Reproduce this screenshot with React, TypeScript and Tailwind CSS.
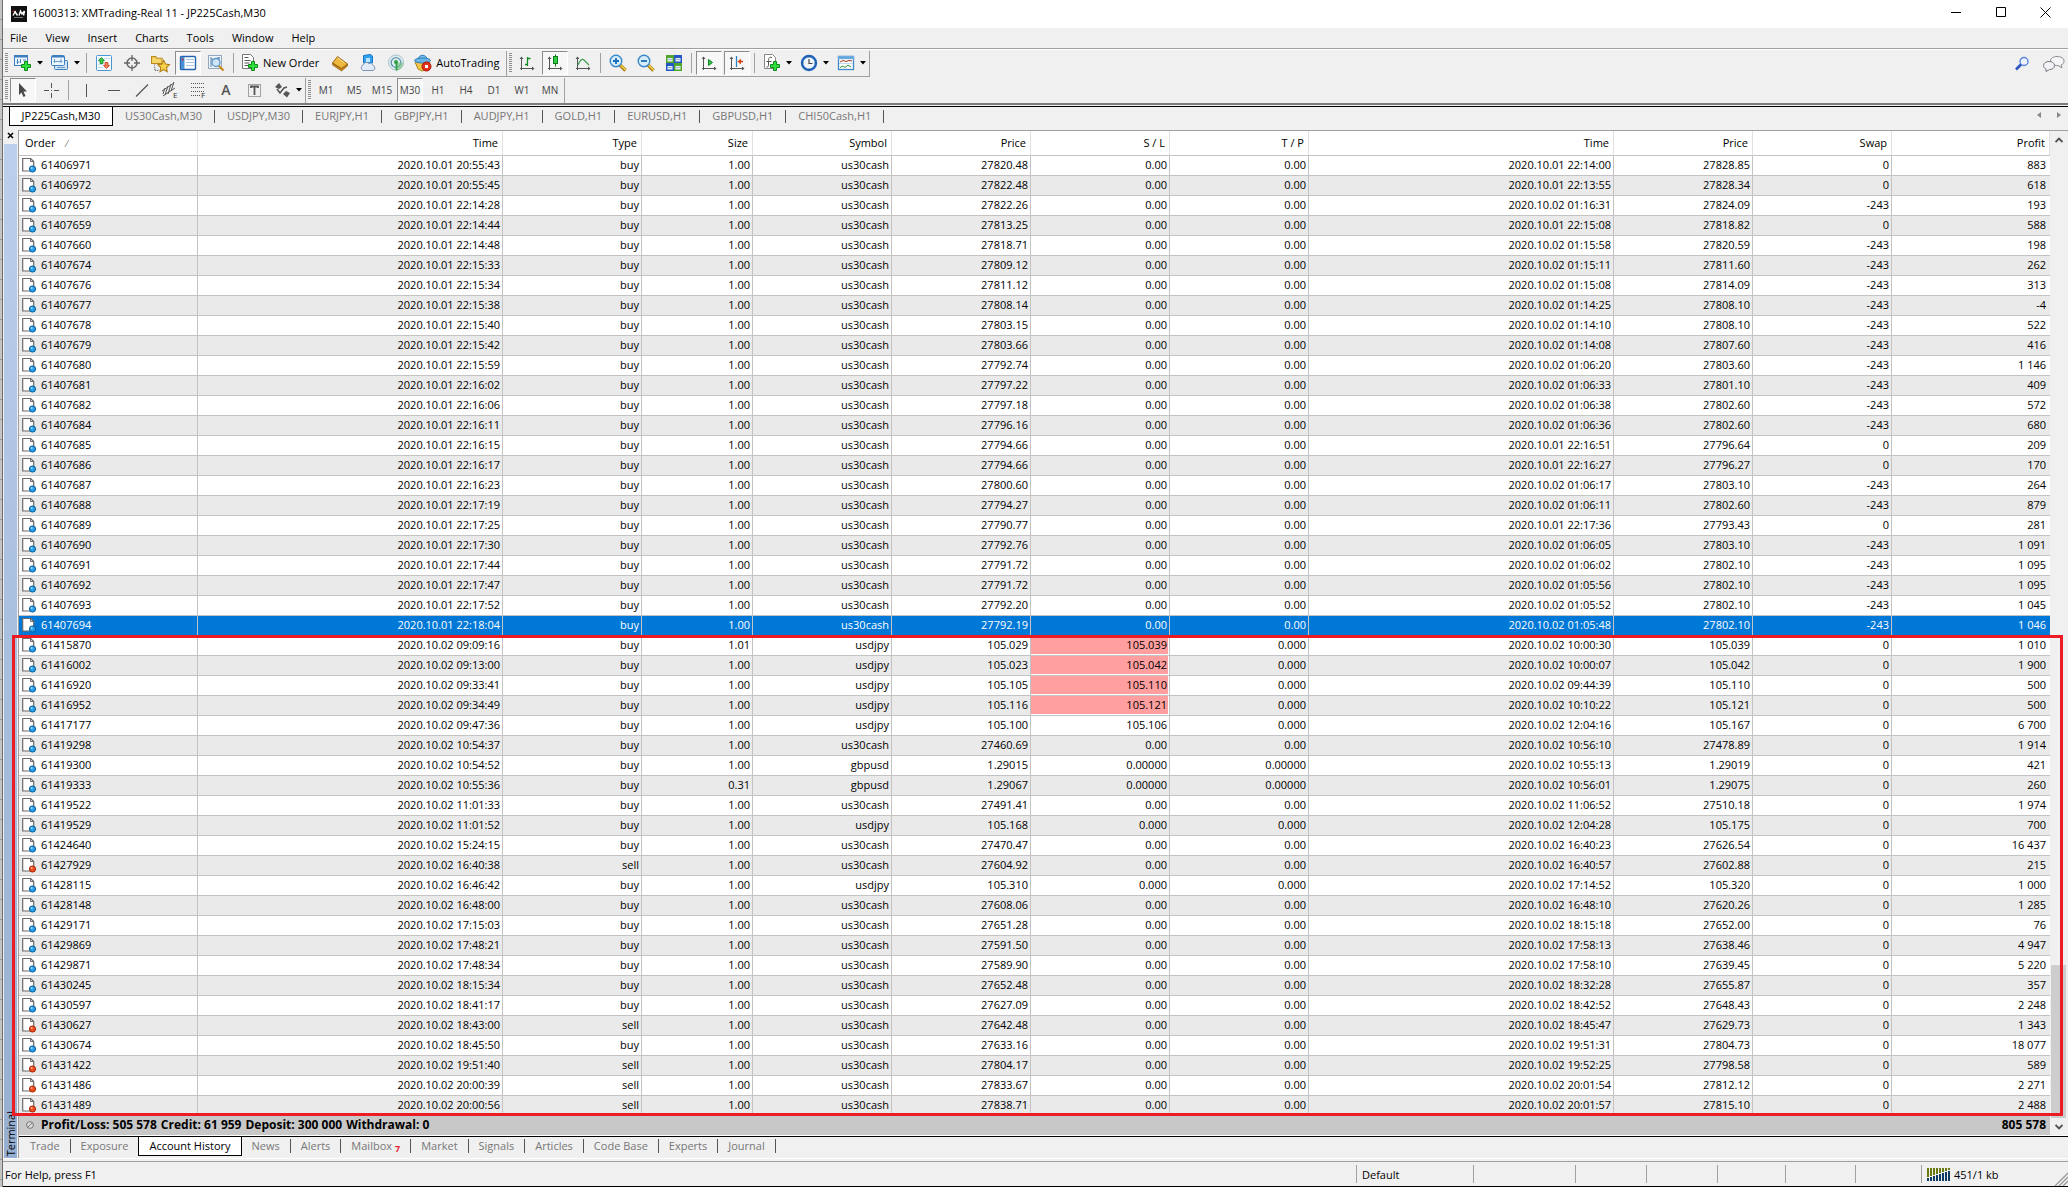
import type { ReactNode } from 'react';

type Trade = {
    order: string;
    openTime: string;
    type: string;
    size: string;
    symbol: string;
    price: string;
    sl: string;
    tp: string;
    closeTime: string;
    closePrice: string;
    swap: string;
    profit: string;
    stopHit: boolean;
};

const SELECTED_ORDER = '61407694';

// order | open time | type | size | symbol | price | s/l | t/p | close time | close price | swap | profit
// a * after the s/l marks a trade that was closed by its stop
const history = `
61406971|2020.10.01 20:55:43|buy|1.00|us30cash|27820.48|0.00|0.00|2020.10.01 22:14:00|27828.85|0|883
61406972|2020.10.01 20:55:45|buy|1.00|us30cash|27822.48|0.00|0.00|2020.10.01 22:13:55|27828.34|0|618
61407657|2020.10.01 22:14:28|buy|1.00|us30cash|27822.26|0.00|0.00|2020.10.02 01:16:31|27824.09|-243|193
61407659|2020.10.01 22:14:44|buy|1.00|us30cash|27813.25|0.00|0.00|2020.10.01 22:15:08|27818.82|0|588
61407660|2020.10.01 22:14:48|buy|1.00|us30cash|27818.71|0.00|0.00|2020.10.02 01:15:58|27820.59|-243|198
61407674|2020.10.01 22:15:33|buy|1.00|us30cash|27809.12|0.00|0.00|2020.10.02 01:15:11|27811.60|-243|262
61407676|2020.10.01 22:15:34|buy|1.00|us30cash|27811.12|0.00|0.00|2020.10.02 01:15:08|27814.09|-243|313
61407677|2020.10.01 22:15:38|buy|1.00|us30cash|27808.14|0.00|0.00|2020.10.02 01:14:25|27808.10|-243|-4
61407678|2020.10.01 22:15:40|buy|1.00|us30cash|27803.15|0.00|0.00|2020.10.02 01:14:10|27808.10|-243|522
61407679|2020.10.01 22:15:42|buy|1.00|us30cash|27803.66|0.00|0.00|2020.10.02 01:14:08|27807.60|-243|416
61407680|2020.10.01 22:15:59|buy|1.00|us30cash|27792.74|0.00|0.00|2020.10.02 01:06:20|27803.60|-243|1 146
61407681|2020.10.01 22:16:02|buy|1.00|us30cash|27797.22|0.00|0.00|2020.10.02 01:06:33|27801.10|-243|409
61407682|2020.10.01 22:16:06|buy|1.00|us30cash|27797.18|0.00|0.00|2020.10.02 01:06:38|27802.60|-243|572
61407684|2020.10.01 22:16:11|buy|1.00|us30cash|27796.16|0.00|0.00|2020.10.02 01:06:36|27802.60|-243|680
61407685|2020.10.01 22:16:15|buy|1.00|us30cash|27794.66|0.00|0.00|2020.10.01 22:16:51|27796.64|0|209
61407686|2020.10.01 22:16:17|buy|1.00|us30cash|27794.66|0.00|0.00|2020.10.01 22:16:27|27796.27|0|170
61407687|2020.10.01 22:16:23|buy|1.00|us30cash|27800.60|0.00|0.00|2020.10.02 01:06:17|27803.10|-243|264
61407688|2020.10.01 22:17:19|buy|1.00|us30cash|27794.27|0.00|0.00|2020.10.02 01:06:11|27802.60|-243|879
61407689|2020.10.01 22:17:25|buy|1.00|us30cash|27790.77|0.00|0.00|2020.10.01 22:17:36|27793.43|0|281
61407690|2020.10.01 22:17:30|buy|1.00|us30cash|27792.76|0.00|0.00|2020.10.02 01:06:05|27803.10|-243|1 091
61407691|2020.10.01 22:17:44|buy|1.00|us30cash|27791.72|0.00|0.00|2020.10.02 01:06:02|27802.10|-243|1 095
61407692|2020.10.01 22:17:47|buy|1.00|us30cash|27791.72|0.00|0.00|2020.10.02 01:05:56|27802.10|-243|1 095
61407693|2020.10.01 22:17:52|buy|1.00|us30cash|27792.20|0.00|0.00|2020.10.02 01:05:52|27802.10|-243|1 045
61407694|2020.10.01 22:18:04|buy|1.00|us30cash|27792.19|0.00|0.00|2020.10.02 01:05:48|27802.10|-243|1 046
61415870|2020.10.02 09:09:16|buy|1.01|usdjpy|105.029|105.039*|0.000|2020.10.02 10:00:30|105.039|0|1 010
61416002|2020.10.02 09:13:00|buy|1.00|usdjpy|105.023|105.042*|0.000|2020.10.02 10:00:07|105.042|0|1 900
61416920|2020.10.02 09:33:41|buy|1.00|usdjpy|105.105|105.110*|0.000|2020.10.02 09:44:39|105.110|0|500
61416952|2020.10.02 09:34:49|buy|1.00|usdjpy|105.116|105.121*|0.000|2020.10.02 10:10:22|105.121|0|500
61417177|2020.10.02 09:47:36|buy|1.00|usdjpy|105.100|105.106|0.000|2020.10.02 12:04:16|105.167|0|6 700
61419298|2020.10.02 10:54:37|buy|1.00|us30cash|27460.69|0.00|0.00|2020.10.02 10:56:10|27478.89|0|1 914
61419300|2020.10.02 10:54:52|buy|1.00|gbpusd|1.29015|0.00000|0.00000|2020.10.02 10:55:13|1.29019|0|421
61419333|2020.10.02 10:55:36|buy|0.31|gbpusd|1.29067|0.00000|0.00000|2020.10.02 10:56:01|1.29075|0|260
61419522|2020.10.02 11:01:33|buy|1.00|us30cash|27491.41|0.00|0.00|2020.10.02 11:06:52|27510.18|0|1 974
61419529|2020.10.02 11:01:52|buy|1.00|usdjpy|105.168|0.000|0.000|2020.10.02 12:04:28|105.175|0|700
61424640|2020.10.02 15:24:15|buy|1.00|us30cash|27470.47|0.00|0.00|2020.10.02 16:40:23|27626.54|0|16 437
61427929|2020.10.02 16:40:38|sell|1.00|us30cash|27604.92|0.00|0.00|2020.10.02 16:40:57|27602.88|0|215
61428115|2020.10.02 16:46:42|buy|1.00|usdjpy|105.310|0.000|0.000|2020.10.02 17:14:52|105.320|0|1 000
61428148|2020.10.02 16:48:00|buy|1.00|us30cash|27608.06|0.00|0.00|2020.10.02 16:48:10|27620.26|0|1 285
61429171|2020.10.02 17:15:03|buy|1.00|us30cash|27651.28|0.00|0.00|2020.10.02 18:15:18|27652.00|0|76
61429869|2020.10.02 17:48:21|buy|1.00|us30cash|27591.50|0.00|0.00|2020.10.02 17:58:13|27638.46|0|4 947
61429871|2020.10.02 17:48:34|buy|1.00|us30cash|27589.90|0.00|0.00|2020.10.02 17:58:10|27639.45|0|5 220
61430245|2020.10.02 18:15:34|buy|1.00|us30cash|27652.48|0.00|0.00|2020.10.02 18:32:28|27655.87|0|357
61430597|2020.10.02 18:41:17|buy|1.00|us30cash|27627.09|0.00|0.00|2020.10.02 18:42:52|27648.43|0|2 248
61430627|2020.10.02 18:43:00|sell|1.00|us30cash|27642.48|0.00|0.00|2020.10.02 18:45:47|27629.73|0|1 343
61430674|2020.10.02 18:45:50|buy|1.00|us30cash|27633.16|0.00|0.00|2020.10.02 19:51:31|27804.73|0|18 077
61431422|2020.10.02 19:51:40|sell|1.00|us30cash|27804.17|0.00|0.00|2020.10.02 19:52:25|27798.58|0|589
61431486|2020.10.02 20:00:39|sell|1.00|us30cash|27833.67|0.00|0.00|2020.10.02 20:01:54|27812.12|0|2 271
61431489|2020.10.02 20:00:56|sell|1.00|us30cash|27838.71|0.00|0.00|2020.10.02 20:01:57|27815.10|0|2 488
`;

const trades: Trade[] = history
    .trim()
    .split('\n')
    .map(line => {
        const f = line.split('|');
        return {
            order: f[0],
            openTime: f[1],
            type: f[2],
            size: f[3],
            symbol: f[4],
            price: f[5],
            sl: f[6].replace('*', ''),
            tp: f[7],
            closeTime: f[8],
            closePrice: f[9],
            swap: f[10],
            profit: f[11],
            stopHit: f[6].endsWith('*'),
        };
    });

const menus = ['File', 'View', 'Insert', 'Charts', 'Tools', 'Window', 'Help'];
const timeframes = ['M1', 'M5', 'M15', 'M30', 'H1', 'H4', 'D1', 'W1', 'MN'];
const chartTabs = [
    'JP225Cash,M30', 'US30Cash,M30', 'USDJPY,M30', 'EURJPY,H1', 'GBPJPY,H1',
    'AUDJPY,H1', 'GOLD,H1', 'EURUSD,H1', 'GBPUSD,H1', 'CHI50Cash,H1',
];
const terminalTabs = [
    'Trade', 'Exposure', 'Account History', 'News', 'Alerts', 'Mailbox',
    'Market', 'Signals', 'Articles', 'Code Base', 'Experts', 'Journal',
];

/* ---------- icons ---------- */

function Icon({ children, size = 18 }: { children: ReactNode; size?: number }) {
    return (
        <svg width={size} height={size} viewBox="0 0 18 18" fill="none" className="shrink-0 overflow-visible">
            {children}
        </svg>
    );
}

const plus = <path d="M10.5 7.500h3v3h3v3h-3v3h-3v-3h-3v-3h3z" fill="#2fe03a" stroke="#0b8a1c" />;

const axes = (
    <>
        <path d="M3.500 4v12M2 14.500h13" stroke="#555" />
        <path d="M1.500 5l2-2.500 2 2.500zM14 12.500l2.500 2-2.500 2z" fill="#555" />
    </>
);

function NewChartIcon() {
    return (
        <Icon>
            <rect x="0.500" y="1.500" width="13" height="10" fill="#eef6fd" stroke="#3c7cbf" />
            <path d="M1 2h12v1.500H1z" fill="#3c7cbf" />
            <path d="M3.500 5v5M2.500 8h3M6.500 5v4M9 6h3" stroke="#4b86bd" />
            {plus}
        </Icon>
    );
}

function ProfilesIcon() {
    return (
        <Icon>
            <rect x="3.500" y="6.500" width="13" height="9" rx="1" fill="#d3e6f7" stroke="#3c7cbf" />
            <rect x="0.500" y="1.500" width="13" height="10" rx="1" fill="#eef6fd" stroke="#3c7cbf" />
            <path d="M1 2h12v1.500H1z" fill="#3c7cbf" />
            <path d="M3.500 5v4M2.500 7.500h9M10 5v4" stroke="#6a9cca" />
            <path d="M6 13.500h8" stroke="#6a9cca" />
        </Icon>
    );
}

function MarketWatchIcon() {
    return (
        <Icon>
            <rect x="1.500" y="1.500" width="15" height="15" rx="1" fill="#f7fbff" stroke="#4b96d0" />
            <path d="M3 4.500h2M9 4.500h6M3 7.500h1M3 10.500h5M3 13.500h5" stroke="#c3dcf0" />
            <path d="M6.500 3.500l3 3h-1.500v3h-3v-3h-1.500z" fill="#3fc84a" stroke="#14861f" strokeWidth="0.8" />
            <path d="M11.500 14.500l3-3h-1.500v-3h-3v3h-1.500z" fill="#f5855f" stroke="#c53a1c" strokeWidth="0.8" />
        </Icon>
    );
}

function DataWindowIcon() {
    return (
        <Icon>
            <circle cx="9" cy="9" r="5" stroke="#666" strokeWidth="1.500" />
            <path d="M9 1v6M9 11v6M1 9h6M11 9h6" stroke="#666" strokeWidth="1.300" />
        </Icon>
    );
}

function NavigatorIcon() {
    return (
        <Icon size={19}>
            <path d="M0.500 2.500h4l1 1.500h5v5h-10z" fill="#f6d667" stroke="#b98a1d" />
            <path d="M3.500 10v5.500h4" stroke="#555" strokeDasharray="1 1" />
            <path d="M12 6l1.800 3.600 3.700.5-2.800 2.700.7 4-3.400-2-3.500 2 .7-4L6.500 10l3.800-.4z" fill="#f8d04c" stroke="#b07c10" />
        </Icon>
    );
}

function TerminalIcon() {
    return (
        <Icon>
            <rect x="1.500" y="2.500" width="15" height="13" rx="1" fill="#fff" stroke="#2467b0" strokeWidth="1.400" />
            <rect x="2" y="3" width="3.500" height="12" fill="#4a90d9" />
            <path d="M3.500 4.500v2" stroke="#d01818" strokeWidth="1.500" />
            <path d="M7 5.500h8M7 8.500h8M7 11.500h8" stroke="#a8c6e4" />
        </Icon>
    );
}

function TesterIcon() {
    return (
        <Icon>
            <rect x="1.500" y="1.500" width="13" height="13" fill="#f2f6fa" stroke="#8fa8bf" />
            <path d="M4 3v10M6 5H4M12 3v10M10 4h3" stroke="#5b82a8" />
            <circle cx="9" cy="8.500" r="4" fill="#cfe6f8" stroke="#5a94c8" strokeWidth="1.300" />
            <path d="M12 12l4.500 4.500" stroke="#c99024" strokeWidth="2.400" />
        </Icon>
    );
}

function NewOrderIcon() {
    return (
        <Icon>
            <path d="M1.500 0.500h8l3 3v11h-11z" fill="#fff" stroke="#777" />
            <path d="M3.500 3.500h4M3.500 6.500h6M3.500 9h5M3.500 11.500h4" stroke="#555" />
            {plus}
        </Icon>
    );
}

function MetaEditorIcon() {
    return (
        <Icon>
            <path d="M6.500 2.500L16.500 10l-6 4.500L1.500 9z" fill="#edb83c" stroke="#a46b12" />
            <path d="M1.500 9l9 5.500 6-4.500v2l-6 5-9-6z" fill="#c17f18" stroke="#8d5a0c" strokeWidth="0.600" />
            <path d="M6.500 4l7 5" stroke="#fbe09a" />
        </Icon>
    );
}

function CloudIcon() {
    return (
        <Icon>
            <path d="M4.500 1.500l7-1 2 1.500v7h-9z" fill="#2fa0ee" stroke="#1a74c4" />
            <path d="M7 4h4v4H7z" fill="#bfe3fb" />
            <path d="M4 16.500a3 3 0 0 1 0-5.500 3.600 3.600 0 0 1 6-1.500 3 3 0 0 1 4 2 2.600 2.600 0 0 1 0 5z" fill="#e3ebf5" stroke="#7e97b8" />
        </Icon>
    );
}

function SignalIcon() {
    return (
        <Icon>
            <circle cx="9" cy="8.500" r="7.500" fill="#e2edf0" stroke="#a9c2cc" />
            <circle cx="9" cy="8.500" r="4.800" stroke="#5d93b0" strokeWidth="1.300" />
            <path d="M9 8.500h7.500a8 8 0 0 1-6.500 8z" fill="#74c47c" opacity="0.600" />
            <circle cx="9" cy="8" r="2" fill="#2f9e45" />
            <path d="M9.500 8.500v8" stroke="#2f9e45" strokeWidth="1.800" />
        </Icon>
    );
}

function AutoTradingIcon() {
    return (
        <Icon>
            <path d="M1 8h15l-3 7.500-5 1.500-4-2z" fill="#f2c646" stroke="#b3841c" />
            <path d="M4 6.500c0-7 9-7 9.500 0z" fill="#74bdec" stroke="#2f7db8" />
            <ellipse cx="8.500" cy="6.500" rx="8" ry="2.500" fill="#6bb4e6" stroke="#2f7db8" />
            <circle cx="12.500" cy="12.500" r="4.500" fill="#e1301c" stroke="#a81408" />
            <path d="M11 11h3v3h-3z" fill="#fff" />
        </Icon>
    );
}

function BarChartIcon() {
    return <Icon>{axes}<path d="M9.500 3v9M9.500 4.500h3M7 10.500h2.500" stroke="#118a22" strokeWidth="1.300" /></Icon>;
}

function CandleIcon() {
    return <Icon>{axes}<path d="M9.500 0.500v12" stroke="#0d6b1a" /><rect x="7.500" y="2.500" width="4" height="7" fill="#2fd043" stroke="#0d7a1c" /></Icon>;
}

function LineChartIcon() {
    return <Icon>{axes}<path d="M4 11c2-5 4-6.500 6-5l5 5" stroke="#3aa04a" strokeWidth="1.200" /></Icon>;
}

function ZoomIcon({ zoomIn }: { zoomIn?: boolean }) {
    return (
        <Icon>
            <path d="M11 11l5.500 5.500" stroke="#a87d14" strokeWidth="3.400" />
            <path d="M11.500 11l5 5" stroke="#f3d04a" strokeWidth="1.600" />
            <circle cx="7" cy="7" r="5.800" fill="#d5ecfb" stroke="#3a86c8" strokeWidth="1.400" />
            <path d={zoomIn ? 'M4 7h6M7 4v6' : 'M4 7h6'} stroke="#1b6db8" strokeWidth="1.800" />
        </Icon>
    );
}

function TileIcon() {
    return (
        <Icon>
            <path d="M1 1h8v8H1zM9 9h8v8H9z" fill="#4fa52d" />
            <path d="M9 1h8v8H9zM1 9h8v8H1z" fill="#2456c4" />
            <path d="M2.500 4h5v3.500h-5zM10.500 4h5v3.500h-5zM2.500 12h5v3.500h-5zM10.500 12h5v3.500h-5z" fill="#e8f1f8" />
            <path d="M3 5.500h4M11 5.500h4M3 13.500h4M11 13.500h4" stroke="#9fb6c8" />
        </Icon>
    );
}

function AutoScrollIcon() {
    return <Icon>{axes}<path d="M8.500 5.500l4 3-4 3z" fill="#38c048" stroke="#0f8a20" /></Icon>;
}

function ChartShiftIcon() {
    return <Icon>{axes}<path d="M8.500 2v11" stroke="#2a7fc0" strokeWidth="1.300" /><path d="M15 7.500h-4" stroke="#c0390c" strokeWidth="1.500" /><path d="M13 4.500v6l-3.500-3z" fill="#d8480f" /></Icon>;
}

function IndicatorsIcon() {
    return (
        <Icon>
            <path d="M1.500 0.500h8l3 3v11h-11z" fill="#fff" stroke="#888" />
            <path d="M9 3.500c-3-1-3.500 1-3.500 3v5c0 1-.5 1.500-2 1.500M3.500 7.500h5" stroke="#555" />
            {plus}
        </Icon>
    );
}

function ClockIcon() {
    return (
        <Icon>
            <circle cx="9" cy="9" r="7" fill="#eef5fc" stroke="#1e62b8" strokeWidth="2.400" />
            <path d="M9 5v4.500h3.500" stroke="#444" strokeWidth="1.200" />
            <path d="M9 3v1M9 14v1M3 9h1M14 9h1" stroke="#888" />
        </Icon>
    );
}

function TemplateIcon() {
    return (
        <Icon>
            <rect x="1.500" y="2.500" width="15" height="13" fill="#fff" stroke="#3f86cc" strokeWidth="1.300" />
            <path d="M1 2h16v3H1zM2 9.500h14" fill="#5fa2de" stroke="#9cc2e4" strokeWidth="0.600" />
            <path d="M3 8l3-1.500 3 1 3-1 3 .5" stroke="#a83218" />
            <path d="M3 13.500l3-1.500 2 1.500 3-2.500 3 2" stroke="#2f9a3e" />
        </Icon>
    );
}

function CursorIcon() {
    return <Icon><path d="M5 2l8 8.500H9.500l2 4.500-2 1-2-4.500L5 14z" fill="#4a4a4a" /></Icon>;
}

function CrosshairIcon() {
    return <Icon><path d="M9.500 2v5M9.500 12v5M2 9.500h5M12 9.500h5M9 9.500h1" stroke="#555" /></Icon>;
}

function VLineIcon() {
    return <Icon><path d="M9.500 3v13" stroke="#555" /></Icon>;
}

function HLineIcon() {
    return <Icon><path d="M3 9.500h12" stroke="#555" /></Icon>;
}

function TrendIcon() {
    return <Icon><path d="M3 15.500L15 3.500" stroke="#555" strokeWidth="1.200" /></Icon>;
}

function ChannelIcon() {
    return (
        <Icon>
            <path d="M1 10L13 2M2 15L14 7M4 14L7 5M7 13l3-10M10 10l3-9M2 13l2-6" stroke="#555" />
            <text x="12" y="17" fontSize="8" fill="#333" className="font-['Open_Sans',sans-serif]">E</text>
        </Icon>
    );
}

function FiboIcon() {
    return (
        <Icon>
            <path d="M2 2.500h14M2 6.500h14M2 10.500h14M2 14.500h9" stroke="#555" strokeDasharray="1 1" />
            <text x="12" y="17" fontSize="8" fill="#333" className="font-['Open_Sans',sans-serif]">F</text>
        </Icon>
    );
}

function LabelIcon() {
    return (
        <Icon>
            <rect x="3.500" y="3.500" width="12" height="12" stroke="#555" strokeDasharray="1 1" />
            <path d="M6 7V5.500h7V7M9.500 5.500V14" stroke="#555" strokeWidth="1.800" />
        </Icon>
    );
}

function ArrowsIcon() {
    return (
        <Icon>
            <path d="M2 6l4-4 3 4-3 2zM10 13l3-3 4 2-3 4.500z" fill="#555" />
            <path d="M4 8l3 4 4-5 3-1" stroke="#555" strokeWidth="1.500" />
        </Icon>
    );
}

function OrderIcon({ sell }: { sell: boolean }) {
    return (
        <svg width="15" height="16" viewBox="0 0 15 16" fill="none" className="shrink-0">
            <path d="M0.700 1.500h8l3 3v9.500h-11z" fill="#fff" stroke="#6b6b6b" strokeWidth="1.200" />
            <path d="M8.500 1.500v3h3" stroke="#6b6b6b" />
            <circle cx="10.500" cy="12" r="3.100" fill={sell ? '#ee4a1c' : '#26a0f0'} stroke={sell ? '#a32c0a' : '#0a5c92'} />
            <circle cx="9.700" cy="11" r="0.900" fill="#fff" opacity="0.600" />
        </svg>
    );
}

function Caret() {
    return (
        <svg width="6" height="4" viewBox="0 0 6 4" className="shrink-0">
            <path d="M0 0h6L3 3.500z" fill="#000" />
        </svg>
    );
}

/* ---------- toolbar parts ---------- */

function Tool({ label, active, menu, text, children }: {
    label: string;
    active?: boolean;
    menu?: boolean;
    text?: string;
    children: ReactNode;
}) {
    if (text) {
        return (
            <button className="flex h-6 shrink-0 items-center">
                <span className="flex w-[26px] items-center justify-center">{children}</span>
                <span className="pr-[7px] pb-px">{text}</span>
            </button>
        );
    }

    return (
        <button aria-label={label} className="flex h-6 shrink-0 items-center">
            <span
                className={
                    active
                        ? 'mx-px flex h-6 w-[26px] items-center justify-center border border-t-[#8c8c8c] border-l-[#8c8c8c] border-r-white border-b-white bg-[#f7f7f7]'
                        : 'flex h-6 w-7 items-center justify-center'
                }
            >
                {children}
            </span>
            {menu && <span className="flex w-[9px] pr-[3px]"><Caret /></span>}
        </button>
    );
}

function Separator() {
    return <span className="mx-[3px] h-5 w-px shrink-0 bg-[#a0a0a0]" />;
}

function BarEnd() {
    return <span className="h-[25px] w-px shrink-0 bg-[#a0a0a0]" />;
}

function Grip() {
    return <span className="mr-px ml-[2px] h-5 w-[3px] shrink-0 bg-[repeating-linear-gradient(#8f8f8f_0_1px,#f0f0f0_1px_2px)]" />;
}

function Toolbars() {
    return (
        <div className="border-t border-[#a0a0a0]">
            <div className="flex h-7 items-center border-t border-white">
                <div className="flex h-[27px] items-center border-b border-[#a0a0a0]">
                    <Grip />
                    <Tool label="New chart" menu><NewChartIcon /></Tool>
                    <Tool label="Profiles" menu><ProfilesIcon /></Tool>
                    <Separator />
                    <Tool label="Market Watch"><MarketWatchIcon /></Tool>
                    <Tool label="Data Window"><DataWindowIcon /></Tool>
                    <Tool label="Navigator"><NavigatorIcon /></Tool>
                    <Tool label="Terminal" active><TerminalIcon /></Tool>
                    <Tool label="Strategy Tester"><TesterIcon /></Tool>
                    <Separator />
                    <Tool label="New Order" text="New Order"><NewOrderIcon /></Tool>
                    <Tool label="MetaEditor"><MetaEditorIcon /></Tool>
                    <Tool label="Cloud"><CloudIcon /></Tool>
                    <Tool label="Signals"><SignalIcon /></Tool>
                    <Tool label="AutoTrading" text="AutoTrading"><AutoTradingIcon /></Tool>
                    <BarEnd />
                    <Grip />
                    <Tool label="Bar Chart"><BarChartIcon /></Tool>
                    <Tool label="Candlesticks" active><CandleIcon /></Tool>
                    <Tool label="Line Chart"><LineChartIcon /></Tool>
                    <Separator />
                    <Tool label="Zoom In"><ZoomIcon zoomIn /></Tool>
                    <Tool label="Zoom Out"><ZoomIcon /></Tool>
                    <Tool label="Tile Windows"><TileIcon /></Tool>
                    <Separator />
                    <Tool label="Auto Scroll" active><AutoScrollIcon /></Tool>
                    <Tool label="Chart Shift" active><ChartShiftIcon /></Tool>
                    <Separator />
                    <Tool label="Indicators" menu><IndicatorsIcon /></Tool>
                    <Tool label="Periods" menu><ClockIcon /></Tool>
                    <Tool label="Templates" menu><TemplateIcon /></Tool>
                    <BarEnd />
                </div>
                <div className="ml-auto flex items-center gap-3 pr-[3px]">
                    <button aria-label="Search">
                        <svg width="16" height="16" viewBox="0 0 16 16" fill="none">
                            <circle cx="10" cy="5.500" r="4" fill="#eef4ff" stroke="#5b82dc" strokeWidth="1.400" />
                            <path d="M7 8.500L2 13.500" stroke="#2c55c0" strokeWidth="2.600" />
                        </svg>
                    </button>
                    <button aria-label="Chat">
                        <svg width="23" height="17" viewBox="0 0 23 17" fill="none">
                            <path d="M15 1.500c4 0 7 1.500 7 4.500 0 2-1 3.500-3 4l1 3-4-2.500c-4 0-7.500-1-7.500-4.500 0-3 3-4.500 6.500-4.500z" fill="#f4f4f8" stroke="#8d8d92" />
                            <path d="M7 6.500c3 0 5.500 1.500 5.500 4s-2 4-5 4L4 16.500v-2.500C2.500 13.500 1.500 12 1.500 10.500c0-2.500 2.500-4 5.500-4z" fill="#f4f4f8" stroke="#77777c" />
                        </svg>
                    </button>
                </div>
            </div>
            <div className="flex h-[26px] items-center">
                <Grip />
                <Tool label="Cursor" active><CursorIcon /></Tool>
                <Tool label="Crosshair"><CrosshairIcon /></Tool>
                <Separator />
                <Tool label="Vertical Line"><VLineIcon /></Tool>
                <Tool label="Horizontal Line"><HLineIcon /></Tool>
                <Tool label="Trendline"><TrendIcon /></Tool>
                <Tool label="Equidistant Channel"><ChannelIcon /></Tool>
                <Tool label="Fibonacci Retracement"><FiboIcon /></Tool>
                <Tool label="Text"><span className="text-sm font-semibold text-[#555]">A</span></Tool>
                <Tool label="Text Label"><LabelIcon /></Tool>
                <Tool label="Arrows" menu><ArrowsIcon /></Tool>
                <BarEnd />
                <Grip />
                {timeframes.map(tf => (
                    <button
                        key={tf}
                        className={
                            tf === 'M30'
                                ? 'mx-px h-6 w-[26px] border border-t-[#8c8c8c] border-l-[#8c8c8c] border-r-white border-b-white bg-[#f7f7f7] text-[10px] text-[#444]'
                                : 'h-6 w-7 text-[10px] text-[#444]'
                        }
                    >
                        {tf}
                    </button>
                ))}
                <BarEnd />
            </div>
        </div>
    );
}

function TitleBar() {
    return (
        <header className="flex h-7 items-center bg-white pl-2">
            <svg width="16" height="16" viewBox="0 0 16 16" className="mr-[5px]">
                <rect width="16" height="16" fill="#111" />
                <path d="M2 9.500l2.500-4.500M3.500 5l3 4.500M8 9.500l1.500-4.500 1.500 3 2.500-3-1 4.500" stroke="#fff" strokeWidth="1.400" fill="none" />
                <path d="M1.500 5.500l2-.5" stroke="#d22" />
                <path d="M3 11.500h9" stroke="#777" />
            </svg>
            <h1 className="pb-[2px]">1600313: XMTrading-Real 11 - JP225Cash,M30</h1>
            <div className="ml-auto flex pb-[3px]">
                <button aria-label="Minimize" className="flex w-[45px] justify-center">
                    <svg width="10" height="10" viewBox="0 0 10 10"><path d="M0 5.500h10" stroke="#000" /></svg>
                </button>
                <button aria-label="Maximize" className="flex w-[45px] justify-center">
                    <svg width="10" height="10" viewBox="0 0 10 10"><path d="M.5.5h9v9h-9z" fill="none" stroke="#000" /></svg>
                </button>
                <button aria-label="Close" className="flex w-[45px] justify-center">
                    <svg width="11" height="11" viewBox="0 0 11 11"><path d="M.5.5l10 10M10.500.5l-10 10" stroke="#000" /></svg>
                </button>
            </div>
        </header>
    );
}

function ChartTabs() {
    return (
        <div className="mt-px flex h-[22px] items-start border-t border-black pl-[6px]">
            {chartTabs.map((tab, i) =>
                i === 0 ? (
                    <button key={tab} className="h-[19px] w-[104px] border border-t-0 border-black bg-white pb-px">{tab}</button>
                ) : (
                    <button key={tab} className="flex h-[18px] items-center text-[#777]">
                        <span className="px-3">{tab}</span>
                        <span className="h-[13px] w-px bg-[#555]" />
                    </button>
                )
            )}
            <div className="ml-auto flex h-4 items-center gap-4 pr-[7px]">
                <button aria-label="Scroll tabs left"><svg width="4" height="6" viewBox="0 0 4 6"><path d="M4 0v6L0 3z" fill="#888" /></svg></button>
                <button aria-label="Scroll tabs right"><svg width="4" height="6" viewBox="0 0 4 6"><path d="M0 0v6l4-3z" fill="#888" /></svg></button>
            </div>
        </div>
    );
}

const th = 'h-[25px] border-r border-b border-r-[#e0e0e0] border-b-[#c3c3c3] pr-1 text-right font-normal';
const td = 'h-5 border-r border-b border-[#c3c3c3] pr-[2px] pb-[2px] text-right';

function HistoryTable() {
    return (
        <table className="w-full table-fixed border-separate border-spacing-0 bg-white">
            <colgroup>
                <col className="w-[179px]" />
                <col />
                <col className="w-[139px]" />
                <col className="w-[111px]" />
                <col className="w-[139px]" />
                <col className="w-[139px]" />
                <col className="w-[139px]" />
                <col className="w-[139px]" />
                <col />
                <col className="w-[139px]" />
                <col className="w-[139px]" />
                <col className="w-[158px]" />
            </colgroup>
            <thead>
                <tr>
                    <th className="h-[25px] border-r border-b border-r-[#e0e0e0] border-b-[#c3c3c3] pl-[6px] text-left font-normal">
                        Order <span className="ml-2 text-[9px] text-[#555]">⁄</span>
                    </th>
                    <th className={th}>Time</th>
                    <th className={th}>Type</th>
                    <th className={th}>Size</th>
                    <th className={th}>Symbol</th>
                    <th className={th}>Price</th>
                    <th className={th}>S / L</th>
                    <th className={th}>T / P</th>
                    <th className={th}>Time</th>
                    <th className={th}>Price</th>
                    <th className={th}>Swap</th>
                    <th className={th}>Profit</th>
                </tr>
            </thead>
            <tbody>
                {trades.map(t => (
                    <tr
                        key={t.order}
                        className={t.order === SELECTED_ORDER ? 'bg-[#0078d7] text-white' : 'even:bg-[#eaeaea]'}
                    >
                        <td className="h-5 border-r border-b border-[#c3c3c3] pl-[3px]">
                            <span className="flex h-[19px] items-center gap-1 pb-[2px]">
                                <OrderIcon sell={t.type === 'sell'} />
                                {t.order}
                            </span>
                        </td>
                        <td className={td}>{t.openTime}</td>
                        <td className={td}>{t.type}</td>
                        <td className={td}>{t.size}</td>
                        <td className={td}>{t.symbol}</td>
                        <td className={td}>{t.price}</td>
                        <td className={t.stopHit ? 'h-5 border-r border-b border-[#c3c3c3] bg-[#ff9f9f] pr-[2px] pb-[2px] text-right shadow-[inset_-1px_-1px_0_#fff]' : td}>{t.sl}</td>
                        <td className={td}>{t.tp}</td>
                        <td className={td}>{t.closeTime}</td>
                        <td className={td}>{t.closePrice}</td>
                        <td className={td}>{t.swap}</td>
                        <td className="h-5 border-b border-[#c3c3c3] pr-1 pb-[2px] text-right">{t.profit}</td>
                    </tr>
                ))}
            </tbody>
            <tfoot>
                <tr className="bg-[#c8c8c8] text-[12px] font-bold">
                    <td colSpan={11} className="h-[19px] pl-[7px]">
                        <span className="flex items-center gap-[7px] pb-px">
                            <svg width="8" height="8" viewBox="0 0 8 8" fill="none">
                                <circle cx="4" cy="4" r="3.400" fill="#ddd" stroke="#777" />
                                <path d="M2 6l4-4" stroke="#777" />
                            </svg>
                            <span className="flex gap-1">
                                <span>Profit/Loss: 505 578</span>
                                <span>Credit: 61 959</span>
                                <span>Deposit: 300 000</span>
                                <span>Withdrawal: 0</span>
                            </span>
                        </span>
                    </td>
                    <td className="pr-1 pb-px text-right">805 578</td>
                </tr>
            </tfoot>
        </table>
    );
}

function ScrollBar() {
    return (
        <div className="flex w-4 shrink-0 flex-col bg-[#f0f0f0] pl-px">
            <button aria-label="Scroll up" className="flex h-[18px] items-center justify-center">
                <svg width="8" height="6" viewBox="0 0 8 6" fill="none"><path d="M.5 5L4 1.500 7.500 5" stroke="#505050" strokeWidth="1.800" /></svg>
            </button>
            <div className="flex flex-1 flex-col justify-end">
                <div className="h-[153px] bg-[#cdcdcd]" />
            </div>
            <button aria-label="Scroll down" className="flex h-[17px] items-center justify-center">
                <svg width="8" height="6" viewBox="0 0 8 6" fill="none"><path d="M.5 1L4 4.500 7.500 1" stroke="#505050" strokeWidth="1.800" /></svg>
            </button>
        </div>
    );
}

function TerminalTabs() {
    return (
        <div className="flex h-[22px] items-start border-t border-black border-b-white pl-px">
            {terminalTabs.map(tab =>
                tab === 'Account History' ? (
                    <button key={tab} className="h-[19px] border border-t-0 border-black bg-white px-[10px] pb-px">{tab}</button>
                ) : (
                    <button key={tab} className="flex h-[18px] items-center text-[#777]">
                        <span className="px-[10px]">
                            {tab}
                            {tab === 'Mailbox' && <sub className="ml-[3px] text-[9px] font-bold text-[#e8202c]">7</sub>}
                        </span>
                        {tab !== 'Exposure' && <span className="h-[14px] w-px bg-[#555]" />}
                    </button>
                )
            )}
        </div>
    );
}

function StatusBar() {
    const cell = 'my-[3px] border-l border-[#a0a0a0]';
    return (
        <footer className="flex h-[25px] border-t border-[#a0a0a0] leading-[19px]">
            <p className="flex-1 pt-[3px] pl-[2px]">For Help, press F1</p>
            <div className="my-[3px] w-[117px] border-l border-[#a0a0a0] pl-[5px]">Default</div>
            <div className={cell + ' w-[102px]'} />
            <div className={cell + ' w-[71px]'} />
            <div className={cell + ' w-[71px]'} />
            <div className={cell + ' w-[68px]'} />
            <div className={cell + ' w-[70px]'} />
            <div className={cell + ' w-[66px]'} />
            <div className="my-[3px] flex w-[133px] items-center gap-1 border-l border-[#a0a0a0] pl-[5px]">
                <svg width="23" height="13" viewBox="0 0 23 13">
                    {[0, 1, 2, 3, 4, 5, 6, 7].map(i => (
                        <g key={i}>
                            <rect x={i * 3} y="0" width="2" height={9 - i} fill="#6b7a10" />
                            <rect x={i * 3} y={10 - i} width="2" height={3 + i} fill="#0c3c66" />
                        </g>
                    ))}
                </svg>
                451/1 kb
            </div>
            <svg width="14" height="14" viewBox="0 0 14 14" className="self-end">
                <path d="M1 14L14 1M5 14l9-9M9 14l5-5" stroke="#999" strokeWidth="1.300" />
            </svg>
        </footer>
    );
}

function App() {
    return (
        <div className="flex min-h-screen bg-[#bdbdbd] font-['Open_Sans','Noto_Sans',sans-serif] text-[11px] leading-4 text-black">
            {/* sliver of the window behind */}
            <div className="w-[3px] shrink-0 border-r border-[#6e6e6e] bg-[repeating-linear-gradient(#c4c4c4_0_19px,#9a9a9a_19px_20px)]" />

            <div className="min-w-0 flex-1">
                <div className="border-b border-black bg-[#f0f0f0]">
                    <TitleBar />
                    <nav className="flex h-5 items-center gap-[18px] pl-[7px]">
                        {menus.map(m => <button key={m}>{m}</button>)}
                    </nav>
                    <Toolbars />
                    <div className="h-[2px] bg-[#7c7c7c]" />
                    <ChartTabs />

                    <div className="mt-[2px] flex">
                        <aside className="flex w-[15px] shrink-0 flex-col pl-px">
                            <button aria-label="Close terminal" className="flex h-[14px] w-3 items-center justify-center pb-1">
                                <svg width="7" height="7" viewBox="0 0 7 7"><path d="M1 1l5 5M6 1L1 6" stroke="#000" strokeWidth="1.500" /></svg>
                            </button>
                            <div className="flex w-[13px] flex-1 items-center justify-start bg-linear-to-b from-[#bcd0ec] to-[#96aed0] [writing-mode:sideways-lr]">
                                <span className="pb-[2px]">Terminal</span>
                            </div>
                        </aside>
                        <main className="min-w-0 flex-1 border-l border-[#a0a0a0]">
                            <div className="relative border-t border-[#a0a0a0]">
                                <div className="flex">
                                    <HistoryTable />
                                    <ScrollBar />
                                    <div className="w-[2px] shrink-0" />
                                </div>
                                {/* marks the trades of 2 October */}
                                <div className="pointer-events-none absolute top-[504px] right-[5px] bottom-[19px] -left-[7px] border-3 border-[#ed1c24]" />
                            </div>
                            <div className="h-px bg-white" />
                            <TerminalTabs />
                        </main>
                    </div>
                    <div className="h-[3px] border-t border-white" />
                    <StatusBar />
                </div>
            </div>
        </div>
    );
}

export default App;
